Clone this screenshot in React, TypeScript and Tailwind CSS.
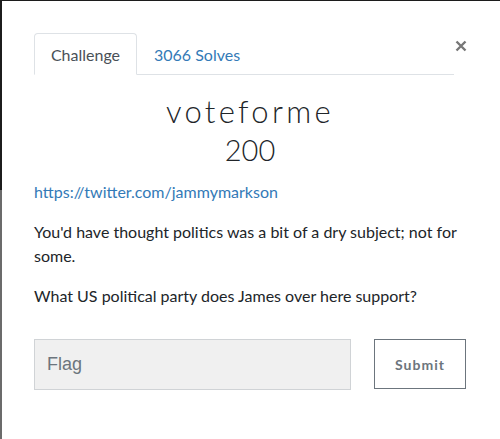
export default function App() {
  return (
    <div className="flex h-[439px] w-[500px] overflow-hidden bg-[#1c1c1c] font-['Lato',sans-serif]">
      <div className="flex w-[2px] flex-col">
        <div className="h-[190px] bg-[#1c1c1c]" />
        <div className="flex-1 bg-[#6b6b6b]" />
      </div>
      <div className="mt-[1px] flex-1 bg-white pl-[32px] pt-[32px] text-[#212529]">
        <div className="flex items-start">
          <div className="flex h-[42px] w-[420px] border-b border-[#dee2e6]">
            <div className="-mb-px flex h-[42px] w-[103px] items-center justify-center rounded-t-[4px] border border-b-white border-[#dee2e6] bg-white pt-[2px] text-[16px] text-[#495057]">
              Challenge
            </div>
            <div className="flex h-[41px] items-center px-[17px] pt-[2px] text-[16px] text-[#337ab7]">
              3066 Solves
            </div>
          </div>
          <button className="ml-[1px] mt-[3px] flex h-[20px] w-[12px] items-center justify-center text-[#777]">
            <svg width="12" height="12" viewBox="0 0 12 12">
              <path d="M1.5 1.5 L10.5 10.5 M10.5 1.5 L1.5 10.5" stroke="currentColor" strokeWidth="2.4" />
            </svg>
          </button>
        </div>
        <div className="w-[432px]">
          <h2 className="mt-[18px] text-center font-['Lato',sans-serif] text-[31px] font-light leading-[36px] tracking-[3.3px] text-[#212529]">
            voteforme
          </h2>
          <div className="mt-[3px] text-center text-[29px] font-light leading-[36px] text-[#212529]">200</div>
          <a className="mt-[12px] block text-[16px] leading-[24px] text-[#337ab7]">
            https://twitter.com/jammymarkson
          </a>
          <p className="mt-[16px] text-[16px] leading-[24px]">
            You'd have thought politics was a bit of a dry subject; not for some.
          </p>
          <p className="mt-[16px] text-[16px] leading-[24px]">
            What US political party does James over here support?
          </p>
          <div className="mt-[31px] flex">
            <input
              placeholder="Flag"
              className="h-[51px] w-[320px] border border-[#d0d3d6] bg-[#f0f0f0] px-[12px] font-['Liberation_Sans',sans-serif] text-[18px] text-[#495057] placeholder:text-[#6c757d]"
            />
            <button className="ml-[23px] h-[50px] w-[93px] border border-[#6c757d] bg-white text-[14px] font-bold tracking-[1px] text-[#6c757d]">
              Submit
            </button>
          </div>
        </div>
      </div>
    </div>
  );
}
